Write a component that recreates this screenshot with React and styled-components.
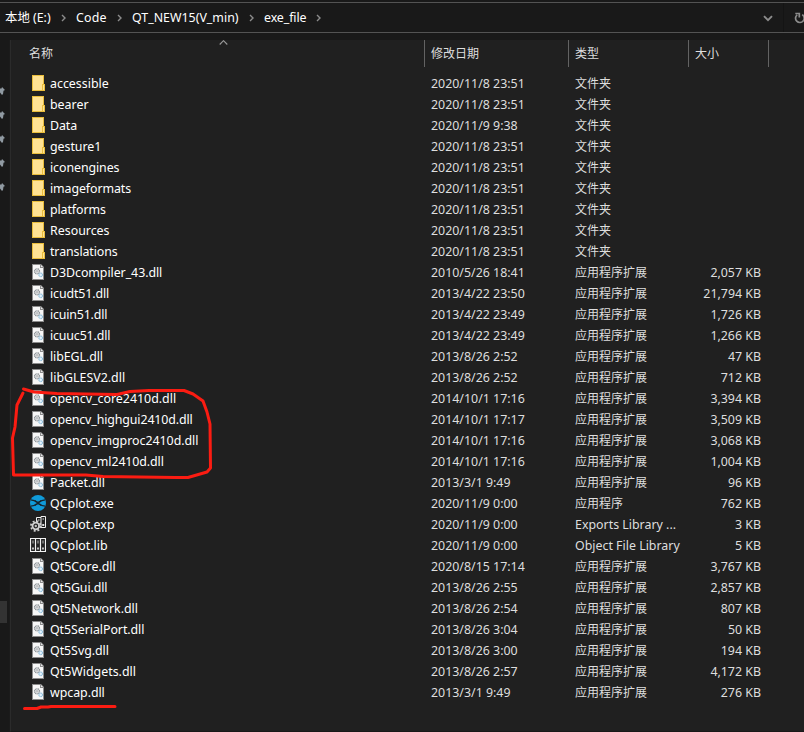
import React from 'react';
import styled, { createGlobalStyle } from 'styled-components';

const GlobalStyle = createGlobalStyle`
  * { box-sizing: border-box; }
  body { margin: 0; background: #191919; overflow: hidden; }
`;

const Window = styled.div`
  position: relative;
  display: flex;
  flex-direction: column;
  width: 804px;
  height: 732px;
  background: #191919;
  color: #fff;
  font: 12.4px/21px 'Noto Sans', 'Noto Sans CJK SC', sans-serif;
  white-space: nowrap;
  overflow: hidden;
`;

const AddressBar = styled.div`
  display: flex;
  height: 31px;
  margin-top: 2px;
  border-top: 1px solid #535353;
  border-bottom: 1px solid #535353;
`;

const Crumbs = styled.div`
  display: flex;
  align-items: center;
  flex: 1;
  padding: 0 0 1px 5px;
`;

const Crumb = styled.span`
  width: ${(p) => p.$width}px;
  letter-spacing: ${(p) => p.$tracking || 0}px;
`;

const CrumbArrow = styled.svg`
  flex: none;
  width: 5px;
  height: 8px;
  margin: 1px 10px 0 10px;
`;

const DropButton = styled.div`
  display: flex;
  align-items: center;
  justify-content: center;
  width: 30px;
  padding-top: 1px;
  padding-right: 1px;
  border-right: 1px solid #141414;
`;

const RefreshButton = styled.div`
  display: flex;
  align-items: center;
  width: 20px;
  padding-left: 10px;
  overflow: hidden;
`;

const ToolbarIcon = styled.svg`
  flex: none;
`;

const Body = styled.div`
  display: flex;
  flex: 1;
  padding-top: 7px;
  min-height: 0;
`;

const NavPane = styled.div`
  display: flex;
  flex-direction: column;
  width: 10px;
  border-right: 1px solid #1b1b1b;
`;

const PinList = styled.div`
  display: flex;
  flex-direction: column;
  gap: 14px;
  padding-top: 46px;
`;

const PinIcon = styled.svg`
  display: block;
  width: 5px;
  height: 10px;
`;

const NavScrollItem = styled.div`
  width: 7px;
  height: 22px;
  margin-top: auto;
  margin-bottom: 109px;
  background: #333;
`;

const FilePane = styled.div`
  flex: 1;
  background: #202020;
  border-left: 1px solid #2b2b2b;
  border-bottom: 1px solid #191919;
`;

const columns = `
  display: grid;
  grid-template-columns: 414px 144px 120px 80px;
`;

const HeaderRow = styled.div`
  ${columns}
  height: 27px;
  color: #dedede;
  font-size: 12px;
  line-height: 27px;
`;

const HeaderCell = styled.div`
  position: relative;
  padding-left: ${(p) => p.$inset}px;
  border-right: 1px solid #636363;
`;

const SortArrow = styled.svg`
  position: absolute;
  top: 0;
  left: 208px;
  width: 9px;
  height: 5px;
`;

const FileList = styled.div`
  padding-top: 6px;
`;

const FileRow = styled.div`
  ${columns}
  height: 21px;
  color: #dedede;
`;

const NameCell = styled.div`
  display: flex;
  align-items: center;
  gap: 4px;
  padding-left: 19px;
  color: #fff;
`;

const FileIcon = styled.svg`
  flex: none;
  width: 16px;
  height: 16px;
  margin-top: -1px;
`;

const FileName = styled.span`
  letter-spacing: ${(p) => p.$tracking}px;
`;

const Cell = styled.div`
  padding-left: 6px;
  font-size: ${(p) => (p.$cjk ? 12 : 12.4)}px;
`;

const SizeCell = styled.div`
  padding-right: 8px;
  text-align: right;
`;

const Annotation = styled.svg`
  position: absolute;
  inset: 0;
  width: 804px;
  height: 732px;
  pointer-events: none;
`;

const FolderIcon = () => (
  <FileIcon viewBox="0 0 16 16">
    <path d="M2 0h12v9h1v7H2z" fill="#e9bd3c" />
    <path d="M3 1h10v8h-1v6H3z" fill="#ffe293" />
    <path d="M13 10h1v5h-1z" fill="#ffe293" />
  </FileIcon>
);

const DllIcon = () => (
  <FileIcon viewBox="0 0 16 16">
    <path d="M2 0h9l3 3v13H2z" fill="#8b8b8b" />
    <path d="M3 1h7v3h3v11H3z" fill="#f7f7f7" />
    <path d="M11 1l2 2h-2z" fill="#e7e7e7" />
    <circle cx="7" cy="7.3" r="2.5" fill="#e6e8ea" stroke="#8b9195" strokeWidth="1.3" strokeDasharray="1.1 .45" />
    <circle cx="7" cy="7.3" r=".8" fill="#fff" stroke="#8b8f92" strokeWidth=".6" />
    <path d="M8.5 9l2 2" stroke="#8f979c" />
    <circle cx="10.7" cy="10.8" r="1.8" fill="#e5f3fc" stroke="#92c0dd" strokeWidth="1.2" strokeDasharray="1 .35" />
  </FileIcon>
);

const ExeIcon = () => (
  <FileIcon viewBox="0 0 16 16">
    <circle cx="8" cy="8" r="8" fill="#109bd9" />
    <path
      d="M.8 4.8C4.500 4.800 6 6.300 8 8S11.500 11.200 15.200 11.200M.8 11.200C4.500 11.200 6 9.700 8 8S11.500 4.800 15.200 4.800"
      fill="none"
      stroke="#16232c"
      strokeWidth="1.300"
    />
    <path d="M5 5.500L8 7.300l3-1.800M5 10.500L8 8.700l3 1.800" fill="none" stroke="#16232c" />
  </FileIcon>
);

const ExpIcon = () => (
  <FileIcon viewBox="0 0 16 16">
    <path d="M6.500 6V1.500h4.500v10M11 1.500V.5h4.500v11H9" fill="none" stroke="#f2f2f2" />
    <path d="M8 4h1.500M12.500 3H14M12.500 8.500H14v1h-1.500z" fill="none" stroke="#e0e0e0" />
    <circle cx="5.800" cy="10" r="4" fill="#202020" />
    <circle cx="5.800" cy="10" r="4.900" fill="none" stroke="#cfcfcf" strokeWidth="1.700" strokeDasharray="1.950 1.900" />
    <circle cx="5.800" cy="10" r="3.300" fill="none" stroke="#cfcfcf" strokeWidth="1.800" />
    <circle cx="5.800" cy="10" r="1.200" fill="#bdbdbd" />
  </FileIcon>
);

const LibIcon = () => (
  <FileIcon viewBox="0 0 16 16">
    <path d="M.5 1.500h5v13h-5zM5.500 1.500h5v13h-5zM10.500 1.500h5v13h-5z" fill="none" stroke="#f2f2f2" strokeWidth="1.200" />
    <path d="M3 3.500v3M8 3.500v3M13 3.500v3" stroke="#bbb" />
    <path d="M2.200 10.500h1.600v2H2.200zM7.200 10.500h1.600v2H7.200zM12.200 10.500h1.600v2h-1.600z" fill="#e6e6e6" />
  </FileIcon>
);

const icons = { folder: FolderIcon, dll: DllIcon, exe: ExeIcon, exp: ExpIcon, lib: LibIcon };
const types = {
  folder: '文件夹',
  dll: '应用程序扩展',
  exe: '应用程序',
  exp: 'Exports Library ...',
  lib: 'Object File Library',
};

// kind, name, modified, size, letter spacing of the name
const files = [
  ['folder', 'accessible', '2020/11/8 23:51', '', 0],
  ['folder', 'bearer', '2020/11/8 23:51', '', 0],
  ['folder', 'Data', '2020/11/9 9:38', '', -0.1],
  ['folder', 'gesture1', '2020/11/8 23:51', '', -0.05],
  ['folder', 'iconengines', '2020/11/8 23:51', '', -0.08],
  ['folder', 'imageformats', '2020/11/8 23:51', '', -0.1],
  ['folder', 'platforms', '2020/11/8 23:51', '', -0.1],
  ['folder', 'Resources', '2020/11/8 23:51', '', 0],
  ['folder', 'translations', '2020/11/8 23:51', '', -0.1],
  ['dll', 'D3Dcompiler_43.dll', '2010/5/26 18:41', '2,057 KB', -0.06],
  ['dll', 'icudt51.dll', '2013/4/22 23:50', '21,794 KB', -0.12],
  ['dll', 'icuin51.dll', '2013/4/22 23:49', '1,726 KB', -0.18],
  ['dll', 'icuuc51.dll', '2013/4/22 23:49', '1,266 KB', -0.15],
  ['dll', 'libEGL.dll', '2013/8/26 2:52', '47 KB', -0.08],
  ['dll', 'libGLESV2.dll', '2013/8/26 2:52', '712 KB', 0],
  ['dll', 'opencv_core2410d.dll', '2014/10/1 17:16', '3,394 KB', 0],
  ['dll', 'opencv_highgui2410d.dll', '2014/10/1 17:17', '3,509 KB', -0.12],
  ['dll', 'opencv_imgproc2410d.dll', '2014/10/1 17:16', '3,068 KB', -0.03],
  ['dll', 'opencv_ml2410d.dll', '2014/10/1 17:16', '1,004 KB', -0.1],
  ['dll', 'Packet.dll', '2013/3/1 9:49', '96 KB', -0.1],
  ['exe', 'QCplot.exe', '2020/11/9 0:00', '762 KB', 0],
  ['exp', 'QCplot.exp', '2020/11/9 0:00', '3 KB', 0],
  ['lib', 'QCplot.lib', '2020/11/9 0:00', '5 KB', 0],
  ['dll', 'Qt5Core.dll', '2020/8/15 17:14', '3,767 KB', 0],
  ['dll', 'Qt5Gui.dll', '2013/8/26 2:55', '2,857 KB', -0.1],
  ['dll', 'Qt5Network.dll', '2013/8/26 2:54', '807 KB', -0.04],
  ['dll', 'Qt5SerialPort.dll', '2013/8/26 3:04', '50 KB', -0.06],
  ['dll', 'Qt5Svg.dll', '2013/8/26 3:00', '194 KB', -0.04],
  ['dll', 'Qt5Widgets.dll', '2013/8/26 2:57', '4,172 KB', 0],
  ['dll', 'wpcap.dll', '2013/3/1 9:49', '276 KB', -0.05],
];

const crumbs = [
  ['本地 (E:)', 46, 0],
  ['Code', 31, 0.15],
  ['QT_NEW15(V_min)', 107, 0],
  ['exe_file', 42, -0.1],
];

export default function App() {
  return (
    <Window>
      <GlobalStyle />
      <AddressBar>
        <Crumbs>
          {crumbs.map(([label, width, tracking]) => (
            <React.Fragment key={label}>
              <Crumb $width={width} $tracking={tracking}>{label}</Crumb>
              <CrumbArrow viewBox="0 0 5 8">
                <path d="M1 1l3 3-3 3" fill="none" stroke="#8c8c8c" strokeWidth="1.4" />
              </CrumbArrow>
            </React.Fragment>
          ))}
        </Crumbs>
        <DropButton>
          <ToolbarIcon width="10" height="7" viewBox="0 0 10 7">
            <path d="M1 1.2l4 4 4-4" fill="none" stroke="#8c8c8c" strokeWidth="1.9" />
          </ToolbarIcon>
        </DropButton>
        <RefreshButton>
          <ToolbarIcon width="12" height="12" viewBox="0 0 12 12">
            <path d="M8.200 2.600A4.300 4.300 0 1 1 3.200 2.800M1.300 1.500h4v4" fill="none" stroke="#8c8c8c" strokeWidth="1.700" />
          </ToolbarIcon>
        </RefreshButton>
      </AddressBar>
      <Body>
        <NavPane>
          <PinList>
            {[0, 1, 2, 3, 4].map((n) => (
              <PinIcon key={n} viewBox="0 0 5 10">
                <path d="M0 2.500h1.500L2 1l3 3-1.500.700L3 8 2 9 0 6.500z" fill="#909aa2" />
              </PinIcon>
            ))}
          </PinList>
          <NavScrollItem />
        </NavPane>
        <FilePane>
          <HeaderRow>
            <HeaderCell $inset={18}>
              名称
              <SortArrow viewBox="0 0 9 5">
                <path d="M.7 4.5l3.8-3.8 3.8 3.8" fill="none" stroke="#9a9a9a" strokeWidth="1.100" />
              </SortArrow>
            </HeaderCell>
            <HeaderCell $inset={6}>修改日期</HeaderCell>
            <HeaderCell $inset={6}>类型</HeaderCell>
            <HeaderCell $inset={6}>大小</HeaderCell>
          </HeaderRow>
          <FileList>
            {files.map(([kind, name, modified, size, tracking]) => {
              const Icon = icons[kind];
              return (
                <FileRow key={name}>
                  <NameCell>
                    <Icon />
                    <FileName $tracking={tracking}>{name}</FileName>
                  </NameCell>
                  <Cell>{modified}</Cell>
                  <Cell $cjk={kind !== 'exp' && kind !== 'lib'}>{types[kind]}</Cell>
                  <SizeCell>{size}</SizeCell>
                </FileRow>
              );
            })}
          </FileList>
        </FilePane>
      </Body>
      <Annotation viewBox="0 0 804 732" fill="none" stroke="#fb1c12" strokeWidth="3" strokeLinecap="round" strokeLinejoin="round">
        <path d="M23.5 389L34 392L57 393.5L117 394.5L130 391.5L149 390.5H184L193 394L203 401L207 412L210 424L210.5 468L207 472L188 477.5L176 477.5L103 476.5L86 475H13.5L12.5 438L15 427L17 405L23 393" />
        <path d="M24.5 708.5H37L41 707H48L51 706.5H115" />
      </Annotation>
    </Window>
  );
}
